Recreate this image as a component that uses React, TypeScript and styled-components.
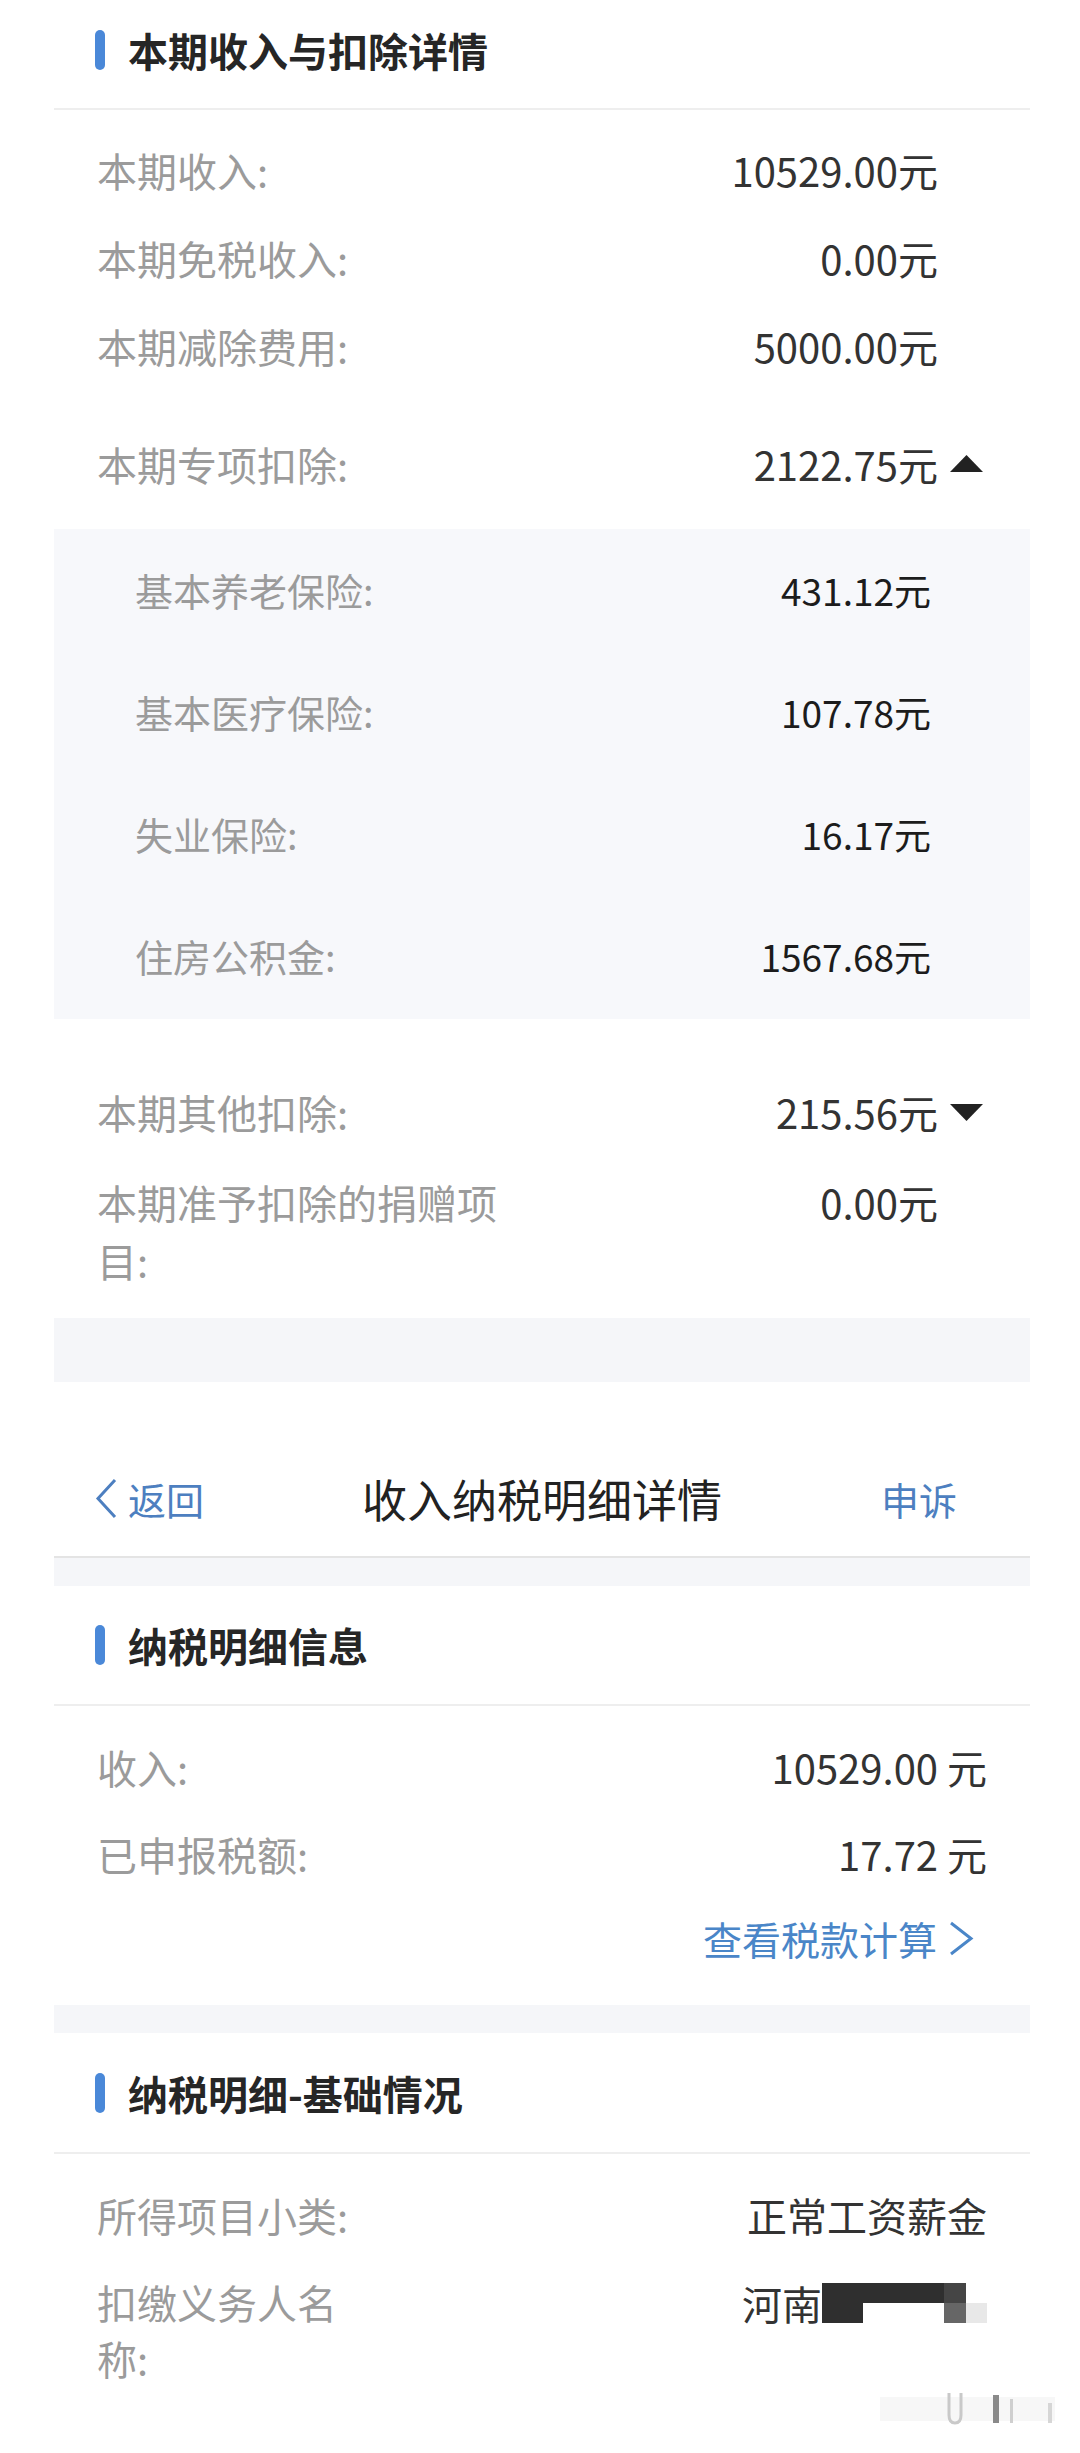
import React from 'react';
import styled, { createGlobalStyle } from 'styled-components';

const GlobalStyle = createGlobalStyle`
  html, body {
    margin: 0;
    padding: 0;
    background: #fff;
  }
  body {
    font-family: "Noto Sans CJK SC", "Noto Sans", sans-serif;
    -webkit-font-smoothing: antialiased;
  }
  * {
    box-sizing: border-box;
  }
`;

const Page = styled.div`
  width: 1080px;
  min-height: 2453px;
  background: #fff;
`;

const Container = styled.div`
  margin-left: 54px;
  width: 976px;
`;

const SectionHeader = styled.div<{ $h: number; $pb?: number }>`
  height: ${p => p.$h}px;
  padding: 0 0 ${p => p.$pb ?? 0}px 41px;
  display: flex;
  align-items: center;
  gap: 23px;
  border-bottom: 2px solid #eeeeee;
`;

const Mark = styled.span`
  width: 10px;
  height: 40px;
  border-radius: 5px;
  background: #4a88d8;
`;

const SectionTitle = styled.h2`
  margin: 0;
  font-size: 40px;
  font-weight: 700;
  color: #262626;
  line-height: 1;
`;

const List = styled.div<{ $pt: number; $pb?: number }>`
  padding: ${p => p.$pt}px 0 ${p => p.$pb ?? 0}px;
`;

const Row = styled.div<{
  $h?: number;
  $mt?: number;
  $pt?: number;
  $pl?: number;
  $pr?: number;
  $top?: boolean;
  $end?: boolean;
}>`
  display: flex;
  justify-content: ${p => (p.$end ? 'flex-end' : 'space-between')};
  align-items: ${p => (p.$top ? 'flex-start' : 'center')};
  height: ${p => (p.$h ? `${p.$h}px` : 'auto')};
  margin-top: ${p => p.$mt ?? 0}px;
  padding: ${p => p.$pt ?? 0}px ${p => p.$pr ?? 43}px 0 ${p => p.$pl ?? 43}px;
`;

const Label = styled.span<{ $size?: number; $w?: number; $lh?: number }>`
  color: #9b9b9b;
  font-size: ${p => p.$size ?? 40}px;
  line-height: ${p => (p.$lh ? `${p.$lh}px` : '1.2')};
  max-width: ${p => (p.$w ? `${p.$w}px` : 'none')};
`;

const Value = styled.span<{ $size?: number; $dark?: boolean; $lh?: number }>`
  color: ${p => (p.$dark ? '#1c1c1c' : '#333333')};
  font-size: ${p => p.$size ?? 40}px;
  line-height: ${p => (p.$lh ? `${p.$lh}px` : '1.2')};
  white-space: nowrap;
  display: flex;
  align-items: center;
`;

const ValueCell = styled.div`
  display: flex;
  align-items: center;
`;

const ArrowSlot = styled.span`
  width: 45px;
  display: flex;
  justify-content: flex-end;
`;

const SubPanel = styled.div`
  background: #f7f8fb;
  padding-bottom: 2px;
`;

const Band = styled.div<{ $h: number }>`
  height: ${p => p.$h}px;
  background: #f5f6f9;
`;

const NavBar = styled.nav`
  height: 176px;
  padding-top: 58px;
  border-bottom: 2px solid #e4e4e4;
  display: grid;
  grid-template-columns: 1fr auto 1fr;
  align-items: center;
`;

const NavBack = styled.span`
  display: flex;
  align-items: center;
  gap: 11px;
  padding-left: 41px;
  color: #4d7fc0;
  font-size: 38px;
`;

const NavTitle = styled.span`
  font-size: 45px;
  color: #222;
`;

const NavAction = styled.span`
  justify-self: end;
  padding-right: 73px;
  color: #4d7fc0;
  font-size: 38px;
`;

const LinkText = styled.span`
  display: flex;
  align-items: center;
  gap: 10px;
  color: #4a86c8;
  font-size: 39px;
`;

const Footer = styled.div`
  display: flex;
  justify-content: flex-end;
  padding: 3px 25px 0 0;
`;

const Triangle = ({ up }: { up?: boolean }) => (
  <svg width="33" height="17" viewBox="0 0 33 17">
    <polygon points={up ? '16.5,0 33,17 0,17' : '0,0 33,0 16.5,17'} fill="#222" />
  </svg>
);

const ChevronLeft = () => (
  <svg width="22" height="41" viewBox="0 0 22 41">
    <polyline points="20,2 3,20.5 20,39" fill="none" stroke="#4d7fc0" strokeWidth="3" />
  </svg>
);

const ChevronRight = () => (
  <svg width="28" height="35" viewBox="0 0 28 35">
    <polyline points="4,2 24,17.5 4,33" fill="none" stroke="#4a86c8" strokeWidth="3" />
  </svg>
);

const Redacted = () => (
  <svg width="165" height="40" viewBox="0 0 165 40">
    <rect x="0" y="0" width="122" height="20" fill="#2f2f2f" />
    <rect x="0" y="0" width="41" height="40" fill="#2f2f2f" />
    <rect x="122" y="0" width="22" height="20" fill="#454545" />
    <rect x="122" y="20" width="22" height="20" fill="#666" />
    <rect x="144" y="20" width="21" height="20" fill="#e8e8e8" />
  </svg>
);

const Watermark = () => (
  <svg width="175" height="37" viewBox="0 0 175 37">
    <rect x="0" y="8" width="175" height="24" fill="#f7f7f7" />
    <path d="M69 4 V26 Q69 34 75 34 Q81 34 81 26 V4" fill="none" stroke="#c9c9c9" strokeWidth="3" />
    <rect x="113" y="6" width="6" height="28" fill="#8a8a8a" />
    <rect x="130" y="10" width="3" height="24" fill="#cfcfcf" />
    <rect x="168" y="14" width="4" height="20" fill="#d6d6d6" />
  </svg>
);

type Item = { label: string; value: string };

const basics: Item[] = [
  { label: '本期收入:', value: '10529.00元' },
  { label: '本期免税收入:', value: '0.00元' },
  { label: '本期减除费用:', value: '5000.00元' },
];

const special: Item[] = [
  { label: '基本养老保险:', value: '431.12元' },
  { label: '基本医疗保险:', value: '107.78元' },
  { label: '失业保险:', value: '16.17元' },
  { label: '住房公积金:', value: '1567.68元' },
];

const TopRow = ({ item, children, ...rest }: { item: Item; children?: React.ReactNode; $h?: number; $pt?: number; $mt?: number }) => (
  <Row $pr={47} {...rest}>
    <Label>{item.label}</Label>
    <ValueCell>
      <Value>{item.value}</Value>
      <ArrowSlot>{children}</ArrowSlot>
    </ValueCell>
  </Row>
);

export default function App() {
  return (
    <Page>
      <GlobalStyle />
      <Container>
        <SectionHeader $h={110} $pb={8}>
          <Mark />
          <SectionTitle>本期收入与扣除详情</SectionTitle>
        </SectionHeader>
        <List $pt={16} $pb={0}>
          {basics.map((item, i) => (
            <TopRow key={i} item={item} $h={88} />
          ))}
          <TopRow item={{ label: '本期专项扣除:', value: '2122.75元' }} $h={139} $pt={8}>
            <Triangle up />
          </TopRow>
          <SubPanel>
            {special.map((item, i) => (
              <Row key={i} $h={122} $pl={81} $pr={99}>
                <Label $size={38}>{item.label}</Label>
                <Value $size={37} $dark>{item.value}</Value>
              </Row>
            ))}
          </SubPanel>
          <TopRow item={{ label: '本期其他扣除:', value: '215.56元' }} $h={122} $mt={32}>
            <Triangle />
          </TopRow>
          <Row $pr={47} $top>
            <Label $w={420} $lh={58}>本期准予扣除的捐赠项目:</Label>
            <ValueCell>
              <Value $lh={58}>0.00元</Value>
              <ArrowSlot />
            </ValueCell>
          </Row>
        </List>
        <Band $h={64} style={{ marginTop: 29 }} />

        <NavBar>
          <NavBack>
            <ChevronLeft />
            返回
          </NavBack>
          <NavTitle>收入纳税明细详情</NavTitle>
          <NavAction>申诉</NavAction>
        </NavBar>
        <Band $h={28} />

        <SectionHeader $h={120}>
          <Mark />
          <SectionTitle>纳税明细信息</SectionTitle>
        </SectionHeader>
        <List $pt={17} $pb={26}>
          <Row $h={87}>
            <Label>收入:</Label>
            <Value>10529.00 元</Value>
          </Row>
          <Row $h={87}>
            <Label>已申报税额:</Label>
            <Value>17.72 元</Value>
          </Row>
          <Row $h={82} $end $pr={55}>
            <LinkText>
              查看税款计算
              <ChevronRight />
            </LinkText>
          </Row>
        </List>
        <Band $h={28} />

        <SectionHeader $h={121}>
          <Mark />
          <SectionTitle>纳税明细-基础情况</SectionTitle>
        </SectionHeader>
        <List $pt={17}>
          <Row $h={88}>
            <Label>所得项目小类:</Label>
            <Value>正常工资薪金</Value>
          </Row>
          <Row $top $pt={15}>
            <Label $w={260} $lh={56}>扣缴义务人名称:</Label>
            <Value $lh={58}>
              河南
              <Redacted />
            </Value>
          </Row>
        </List>
      </Container>
      <Footer>
        <Watermark />
      </Footer>
    </Page>
  );
}
